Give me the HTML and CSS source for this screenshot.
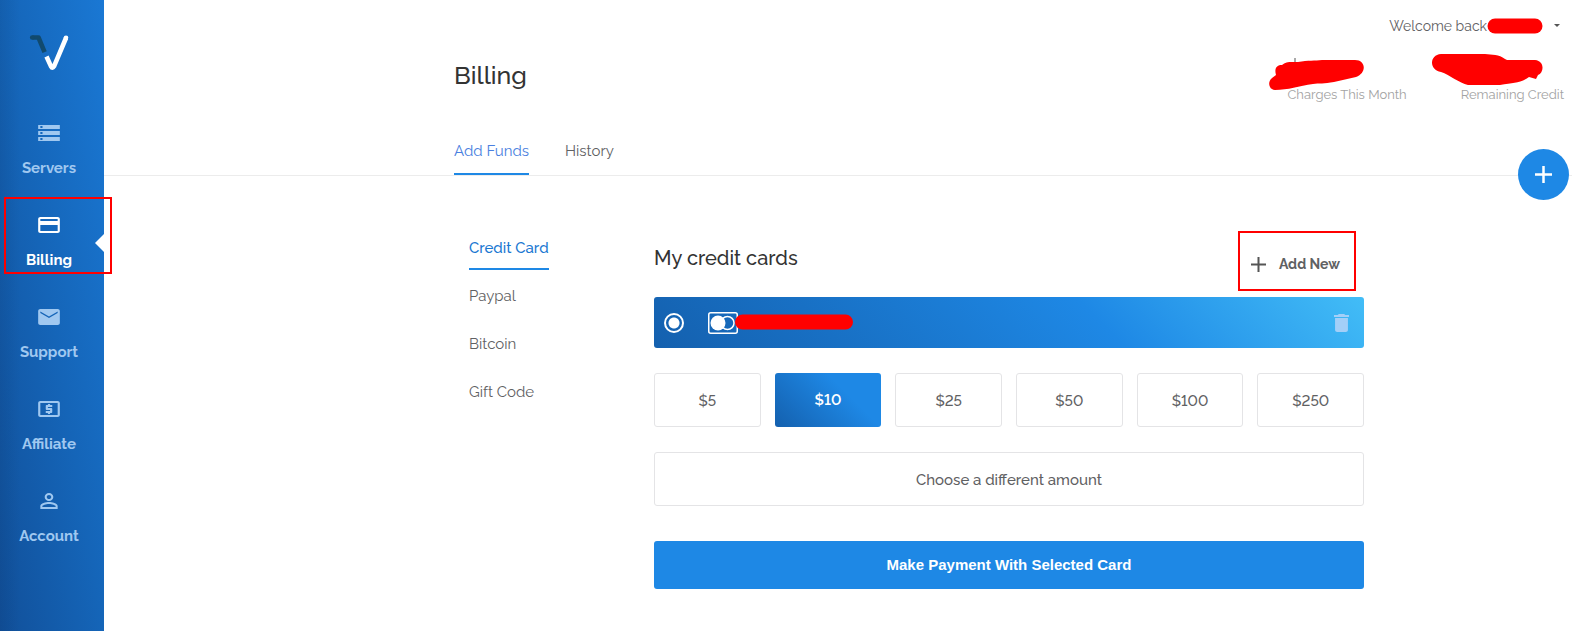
FILE: index.html
```html
<!DOCTYPE html>
<html lang="en">
<head>
<meta charset="utf-8">
<title>Billing</title>
<meta name="viewport" content="width=device-width, initial-scale=1">
<link rel="stylesheet" href="styles.css">
</head>
<body>
<div class="app">
  <aside class="sidebar">
    <a class="logo" href="#" aria-label="Home">
      <svg width="40" height="36" viewBox="0 0 40 36" fill="none" stroke-width="4.6" stroke-linejoin="round">
        <path d="M3.4 2.5H9.5L15.6 17.2" stroke="#114a6e"/>
        <circle cx="3.2" cy="2.5" r="2.3" fill="#114a6e"/>
        <path d="M17.5 21.5L22 31.4Q23.4 34 25 31.4L37 3" stroke="#fff"/>
        <circle cx="37" cy="2.8" r="2.3" fill="#fff"/>
      </svg>
    </a>
    <nav class="menu">
      <a class="item" href="#">
        <svg class="item-icon" viewBox="0 0 24 24" preserveAspectRatio="none"><path d="M2 20h20v-4H2v4zm2-3h2v2H4v-2zM2 4v4h20V4H2zm4 3H4V5h2v2zm-4 7h20v-4H2v4zm2-3h2v2H4v-2z"/></svg>
        <span>Servers</span>
      </a>
      <a class="item item-active" href="#">
        <svg class="item-icon" viewBox="0 0 24 24" preserveAspectRatio="none"><path d="M20 4H4c-1.1 0-2 .9-2 2v12c0 1.1.9 2 2 2h16c1.1 0 2-.9 2-2V6c0-1.1-.9-2-2-2zm0 14H4v-6h16v6zm0-10H4V6h16v2z"/></svg>
        <span>Billing</span>
      </a>
      <a class="item" href="#">
        <svg class="item-icon" viewBox="0 0 24 24" preserveAspectRatio="none"><path d="M20 4H4c-1.1 0-2 .9-2 2v12c0 1.1.9 2 2 2h16c1.1 0 2-.9 2-2V6c0-1.1-.9-2-2-2zm0 4l-8 5-8-5V6.5l8 5 8-5V8z"/></svg>
        <span>Support</span>
      </a>
      <a class="item" href="#">
        <svg class="item-icon" viewBox="0 0 24 24" preserveAspectRatio="none"><path d="M11 17h2v-1h1c.55 0 1-.45 1-1v-3c0-.55-.45-1-1-1h-3v-1h4V8h-2V7h-2v1h-1c-.55 0-1 .45-1 1v3c0 .55.45 1 1 1h3v1H9v2h2v1zm9-13H4c-1.1 0-2 .9-2 2v12c0 1.1.9 2 2 2h16c1.1 0 2-.9 2-2V6c0-1.1-.9-2-2-2zm0 14H4V6h16v12z"/></svg>
        <span>Affiliate</span>
      </a>
      <a class="item" href="#">
        <svg class="item-icon" viewBox="0 0 24 24" preserveAspectRatio="none"><path d="M12 5.9c1.16 0 2.1.94 2.1 2.1s-.94 2.1-2.1 2.1S9.900 9.160 9.900 8s.94-2.100 2.100-2.100m0 9c2.970 0 6.100 1.460 6.100 2.100v1.100H5.900V17c0-.64 3.130-2.100 6.100-2.100M12 4C9.790 4 8 5.790 8 8s1.790 4 4 4 4-1.790 4-4-1.790-4-4-4zm0 9c-2.670 0-8 1.340-8 4v3h16v-3c0-2.660-5.330-4-8-4z"/></svg>
        <span>Account</span>
      </a>
    </nav>
  </aside>

  <main class="main">
    <header class="header">
      <div class="heading">
        <h1 class="title">Billing</h1>
        <nav class="tabs">
          <a class="tab tab-active" href="#">Add Funds</a>
          <a class="tab" href="#">History</a>
        </nav>
      </div>
      <div class="summary">
        <button class="user" type="button">
          <span>Welcome back</span>
          <svg class="user-mark" width="56" height="16" viewBox="0 0 56 16"><path d="M8 8H48" stroke="#f00" stroke-width="15" stroke-linecap="round"/></svg>
          <svg width="6" height="4" viewBox="0 0 6 4"><path d="M0 0h6L3 3z" fill="#555"/></svg>
        </button>
        <svg class="marks" width="276" height="38" viewBox="0 0 276 38" fill="#f00">
          <path d="M27 5V9" stroke="#555" stroke-width="1"/>
          <path d="M7 37C1 37-1 29 4 25L8 22C6 15 9 12 14 12C18 8 24 9 30 9C40 7 47 8 54 7H87C98 7 99 20 88 24L66 29C56 31 51 30 45 31C31 33 20 37 7 37Z"/>
          <path d="M173 1H217C224 2 231 1 237 6L239 7H267C277 8 276 20 270 22L268 26L261 24C251 31 246 29 232 32H200C191 30 182 22 173 19C161 17 161 2 173 1Z"/>
        </svg>
        <div class="captions">
          <span>Charges This Month</span>
          <span>Remaining Credit</span>
        </div>
      </div>
      <button class="add" type="button" aria-label="Deploy new server">
        <svg width="17" height="17" viewBox="0 0 17 17"><path d="M8.500 0V17M0 8.500H17" stroke="#fff" stroke-width="2.500"/></svg>
      </button>
    </header>

    <div class="content">
      <nav class="methods">
        <a class="method method-active" href="#">Credit Card</a>
        <a class="method" href="#">Paypal</a>
        <a class="method" href="#">Bitcoin</a>
        <a class="method" href="#">Gift Code</a>
      </nav>
      <form class="payment">
        <div class="cards-head">
          <h2 class="subtitle">My credit cards</h2>
          <button class="add-card" type="button">
            <svg width="15" height="15" viewBox="0 0 15 15"><path d="M7.500 0V15M0 7.500H15" stroke="#555" stroke-width="2"/></svg>
            <span>Add New</span>
          </button>
        </div>
        <div class="card">
          <label class="card-pick">
            <input class="radio" type="radio" name="card" aria-label="Saved card" checked>
            <svg class="brand" width="30" height="22" viewBox="0 0 30 22" fill="none" stroke="#fff">
              <rect x=".75" y=".75" width="28.500" height="20.500" rx="2" stroke-width="1.500"/>
              <circle cx="19.500" cy="11" r="6.500" stroke-width="1.500"/>
              <circle cx="10" cy="11" r="7.500" fill="#fff" stroke="none"/>
            </svg>
            <svg class="card-mark" width="118" height="18" viewBox="0 0 118 18"><path d="M7.500 8H110.500" stroke="#f00" stroke-width="15" stroke-linecap="round"/></svg>
          </label>
          <button class="remove" type="button" aria-label="Remove card">
            <svg width="15" height="18" viewBox="5 3 14 18" preserveAspectRatio="none"><path fill="#a3cff8" d="M6 19c0 1.100.9 2 2 2h8c1.100 0 2-.9 2-2V7H6v12zM19 4h-3.500l-1-1h-5l-1 1H5v2h14V4z"/></svg>
          </button>
        </div>
        <div class="amounts">
          <button class="amount" type="button">$5</button>
          <button class="amount amount-active" type="button">$10</button>
          <button class="amount" type="button">$25</button>
          <button class="amount" type="button">$50</button>
          <button class="amount" type="button">$100</button>
          <button class="amount" type="button">$250</button>
        </div>
        <button class="amount other" type="button">Choose a different amount</button>
        <button class="pay" type="submit">Make Payment With Selected Card</button>
      </form>
    </div>
  </main>
</div>
</body>
</html>
```
FILE: styles.css
```css
* {
  box-sizing: border-box;
}

body {
  margin: 0;
  background: #fff;
  color: #5f6163;
  font: 15px/24px Raleway, Lato, sans-serif;
}

a {
  color: inherit;
  text-decoration: none;
}

button {
  padding: 0;
  border: 0;
  background: none;
  color: inherit;
  font: inherit;
  cursor: pointer;
}

svg {
  display: block;
}

.app {
  display: flex;
  min-height: 100vh;
}

.sidebar {
  flex: 0 0 104px;
  padding-right: 6px;
  background:
    linear-gradient(to right, rgba(0, 20, 50, .08), transparent 20px),
    linear-gradient(to top right, #11509a, #1565b8 50%, #1a78d4);
}

.logo {
  display: flex;
  justify-content: center;
  padding: 35px 0 36px;
}

.item {
  position: relative;
  display: flex;
  flex-direction: column;
  align-items: center;
  gap: 11px;
  height: 92px;
  padding-top: 14px;
  color: #a0c8f0;
  font-weight: 700;
}

.item-icon {
  width: 26px;
  height: 24px;
  fill: currentColor;
}

.item-active {
  color: #fff;
}

.item-active::before {
  content: "";
  position: absolute;
  top: 35px;
  right: -6px;
  border: solid transparent;
  border-width: 9px 9px 9px 0;
  border-right-color: #fff;
}

/* highlight frame that reaches past the sidebar edge */
.item-active::after {
  content: "";
  position: absolute;
  z-index: 1;
  inset: -2px -14px 17px 4px;
  border: 2px solid #f00;
}

.main {
  flex: 1;
  min-width: 0;
}

.header,
.content {
  display: grid;
  grid-template-columns: minmax(24px, 350fr) minmax(0, 910fr) minmax(0, 208fr);
}

.header {
  position: relative;
  height: 176px;
  border-bottom: 1px solid #ececec;
}

.heading {
  grid-area: 1 / 2;
  padding-top: 59px;
}

.title {
  margin: 0;
  color: #333;
  font-size: 25px;
  font-weight: 500;
  line-height: 32px;
}

.tabs {
  display: flex;
  gap: 36px;
  padding-top: 48px;
}

.tab {
  padding-bottom: 10px;
  border-bottom: 2px solid transparent;
}

.tab-active {
  border-color: #1e88e5;
  color: #4a7fe0;
}

.summary {
  grid-area: 1 / 2 / 2 / 4;
  justify-self: end;
  display: flex;
  flex-direction: column;
  align-items: flex-end;
  padding: 14px 8px 0 0;
}

.user {
  display: flex;
  align-items: center;
  padding-right: 4px;
  font-size: 14px;
}

.user-mark {
  margin-right: 11px;
}

.marks {
  margin: 15px 20px 0 0;
}

.captions {
  display: flex;
  gap: 54px;
  color: #a3a3a3;
  font-size: 13px;
  line-height: 8px;
}

.add {
  position: absolute;
  right: 3px;
  bottom: -25px;
  display: grid;
  place-items: center;
  width: 51px;
  height: 51px;
  border-radius: 50%;
  background: #1e88e5;
}

.methods {
  grid-area: 1 / 2;
  display: flex;
  flex-direction: column;
  align-items: flex-start;
  gap: 14px;
  width: 200px;
  padding: 60px 0 0 15px;
}

.method {
  padding-bottom: 8px;
  border-bottom: 2px solid transparent;
}

.method-active {
  border-color: #1e88e5;
  color: #1b78d2;
  font-weight: 500;
}

.content {
  padding-bottom: 42px;
}

.payment {
  grid-area: 1 / 2;
  display: flex;
  flex-direction: column;
  gap: 25px;
  margin-left: 200px;
  padding-top: 55px;
}

.cards-head {
  display: flex;
  justify-content: space-between;
  margin-bottom: -19px;
}

.subtitle {
  margin: 0;
  padding-top: 11px;
  color: #333;
  font-size: 20px;
  font-weight: 500;
  line-height: 32px;
}

.add-card {
  display: flex;
  align-items: center;
  gap: 13px;
  height: 60px;
  margin-right: 8px;
  padding: 6px 14px 0 11px;
  border: 2px solid #f00;
  font-size: 14px;
  font-weight: 700;
}

.card {
  display: flex;
  align-items: center;
  justify-content: space-between;
  height: 51px;
  padding: 0 15px 0 10px;
  border-radius: 3px;
  background: linear-gradient(45deg, #1460ae, #1e88e5 62%, #42bdf7);
}

.card-pick {
  display: flex;
  align-items: center;
}

.radio {
  appearance: none;
  width: 20px;
  height: 20px;
  margin: 0 24px 0 0;
  border: 2px solid #fff;
  border-radius: 50%;
  background: radial-gradient(circle, #fff 5px, transparent 6px);
}

.card-mark {
  margin-left: -3px;
}

.amounts {
  display: grid;
  grid-template-columns: repeat(6, 1fr);
  gap: 14px;
}

.amount {
  height: 54px;
  padding-top: 2px;
  border: 1px solid #e4e4e6;
  border-radius: 3px;
  font-weight: 500;
  font-variant-numeric: lining-nums;
}

.amount-active {
  padding-top: 0;
  border: 0;
  background: linear-gradient(45deg, #1460ae, #1e88e5 66%);
  color: #fff;
  font-weight: 600;
}

.pay {
  height: 48px;
  margin-top: 10px;
  border-radius: 3px;
  background: #1e88e5;
  color: #fff;
  font-family: "Liberation Sans", Arial, sans-serif;
  font-weight: 700;
}
```
